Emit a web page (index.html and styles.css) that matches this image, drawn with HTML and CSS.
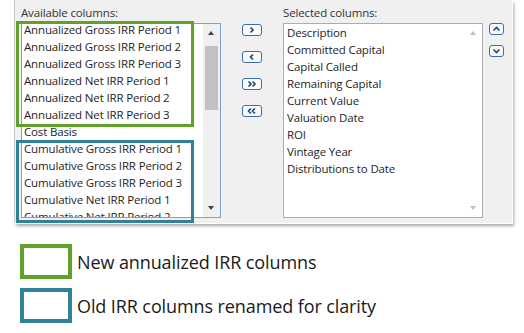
FILE: index.html
```html
<!DOCTYPE html>
<html>
<head>
<meta charset="utf-8">
<link rel="stylesheet" href="styles.css">
</head>
<body>
<div class="panel">
  <div class="col">
    <div class="label">Available columns:</div>
    <div class="listbox focused">
      <div class="viewport">
        <div class="items scrolled">
          <div class="item">Annualized Gross IRR Period 1</div>
          <div class="item">Annualized Gross IRR Period 2</div>
          <div class="item">Annualized Gross IRR Period 3</div>
          <div class="item">Annualized Net IRR Period 1</div>
          <div class="item">Annualized Net IRR Period 2</div>
          <div class="item">Annualized Net IRR Period 3</div>
          <div class="item">Cost Basis</div>
          <div class="item">Cumulative Gross IRR Period 1</div>
          <div class="item">Cumulative Gross IRR Period 2</div>
          <div class="item">Cumulative Gross IRR Period 3</div>
          <div class="item">Cumulative Net IRR Period 1</div>
          <div class="item">Cumulative Net IRR Period 2</div>
        </div>
        <div class="scrollbar">
          <span class="arrow up"></span>
          <span class="track"><span class="thumb"></span></span>
          <span class="arrow down"></span>
        </div>
      </div>
      <div class="hl hl-green"></div>
      <div class="hl hl-teal"></div>
    </div>
  </div>

  <div class="movebtns">
    <div class="btn wide"><svg width="20" height="12" viewBox="0 0 20 12"><path d="M8.5 3.5 L11 6 L8.5 8.5" /></svg></div>
    <div class="btn wide"><svg width="20" height="12" viewBox="0 0 20 12"><path d="M11 3.5 L8.5 6 L11 8.5" /></svg></div>
    <div class="btn wide"><svg width="20" height="12" viewBox="0 0 20 12"><path d="M6.5 3.5 L9 6 L6.5 8.5 M10.5 3.5 L13 6 L10.5 8.5" /></svg></div>
    <div class="btn wide"><svg width="20" height="12" viewBox="0 0 20 12"><path d="M9 3.5 L6.5 6 L9 8.5 M13 3.5 L10.5 6 L13 8.5" /></svg></div>
  </div>

  <div class="col">
    <div class="label">Selected columns:</div>
    <div class="listbox">
      <div class="viewport">
        <div class="items">
          <div class="item">Description</div>
          <div class="item">Committed Capital</div>
          <div class="item">Capital Called</div>
          <div class="item">Remaining Capital</div>
          <div class="item">Current Value</div>
          <div class="item">Valuation Date</div>
          <div class="item">ROI</div>
          <div class="item">Vintage Year</div>
          <div class="item">Distributions to Date</div>
        </div>
        <div class="scrollbar disabled">
          <span class="arrow up"></span>
          <span class="track"></span>
          <span class="arrow down"></span>
        </div>
      </div>
    </div>
  </div>

  <div class="orderbtns">
    <div class="btn narrow"><svg width="15" height="12" viewBox="0 0 15 12"><path d="M4.5 7.5 L7.5 4.5 L10.5 7.5" /></svg></div>
    <div class="btn narrow"><svg width="15" height="12" viewBox="0 0 15 12"><path d="M4.5 4.5 L7.5 7.5 L10.5 4.5" /></svg></div>
  </div>
</div>

<div class="legend">
  <div class="legend-row"><span class="swatch swatch-green"></span><span class="legend-text">New annualized IRR columns</span></div>
  <div class="legend-row"><span class="swatch swatch-teal"></span><span class="legend-text">Old IRR columns renamed for clarity</span></div>
</div>
</body>
</html>
```

FILE: styles.css
```css
* { box-sizing: border-box; }

body {
  margin: 0;
  background: #ffffff;
  font-family: "Open Sans", "Noto Sans", sans-serif;
  color: #1e1e1e;
}

.panel {
  margin-left: 14px;
  width: 498px;
  height: 223px;
  background: #f0f0f0;
  border-left: 1px solid #c8c8c8;
  box-shadow: 0 0 0 1px #ffffff, 2px 3px 3px rgba(0, 0, 0, 0.35);
  display: flex;
  align-items: flex-start;
  padding: 4px 0 0 6px;
}

.col {
  width: 200px;
  display: flex;
  flex-direction: column;
}

.label {
  height: 19px;
  line-height: 18px;
  font-size: 11.5px;
  letter-spacing: -0.15px;
  color: #333333;
}

.listbox {
  position: relative;
  height: 195px;
  background: #ffffff;
  border: 1px solid #abadb3;
}

.listbox.focused {
  border-color: #7da2ce;
}

.viewport {
  height: 100%;
  overflow: hidden;
  display: flex;
}

.items {
  flex: 1;
  padding: 0 0 0 3px;
  font-size: 11.5px;
  letter-spacing: -0.15px;
  line-height: 17px;
  white-space: nowrap;
  overflow: hidden;
}

.focused .items {
  padding-left: 2px;
}

.items.scrolled .item:first-child {
  margin-top: -3px;
}

.scrollbar {
  width: 17px;
  display: flex;
  flex-direction: column;
  align-items: center;
  background: #f0f0f0;
}

.scrollbar.disabled {
  background: #ffffff;
}

.arrow {
  height: 17px;
  width: 17px;
  position: relative;
}

.arrow::after {
  content: "";
  position: absolute;
  left: 5px;
  width: 0;
  height: 0;
  border-left: 3.5px solid transparent;
  border-right: 3.5px solid transparent;
}

.arrow.up::after {
  top: 7px;
  border-bottom: 4px solid #404040;
}

.arrow.down::after {
  top: 6px;
  border-top: 4px solid #404040;
}

.disabled .arrow.up::after { border-bottom-color: #c0c0c0; }
.disabled .arrow.down::after { border-top-color: #c0c0c0; }

.track {
  flex: 1;
  width: 17px;
  display: flex;
  justify-content: center;
}

.thumb {
  margin-top: 5px;
  width: 13px;
  height: 64px;
  background: #c2c2c2;
}

.hl {
  position: absolute;
  left: -6px;
  width: 178px;
  border: 3px solid;
  pointer-events: none;
}

.hl-green {
  top: -3px;
  height: 106px;
  border-color: #5fa12b;
}

.hl-teal {
  top: 116px;
  height: 83px;
  border-color: #2e8398;
}

.movebtns {
  margin-left: 21px;
  margin-right: 21px;
  padding-top: 20px;
  display: flex;
  flex-direction: column;
  gap: 15px;
}

.orderbtns {
  margin-left: 6px;
  padding-top: 19px;
  display: flex;
  flex-direction: column;
  gap: 10px;
}

.btn {
  height: 12px;
  border: 1.5px solid #3d6da6;
  border-radius: 3px;
  background: #fbfbfb;
  display: flex;
  align-items: center;
  justify-content: center;
  overflow: hidden;
}

.btn.wide { width: 20px; }
.btn.narrow { width: 15px; }

.btn svg {
  flex: none;
  fill: none;
  stroke: #1f4a80;
  stroke-width: 1.7;
}

.legend {
  margin: 21px 0 0 20px;
  display: flex;
  flex-direction: column;
  gap: 9px;
}

.legend-row {
  display: flex;
  align-items: center;
  gap: 5px;
}

.swatch {
  width: 52px;
  height: 35px;
  border: 4px solid;
  background: #ffffff;
}

.swatch-green { border-color: #5fa12b; }
.swatch-teal { border-color: #2e8398; }

.legend-text {
  font-size: 18px;
  letter-spacing: -0.1px;
  color: #1a1a1a;
}
```
